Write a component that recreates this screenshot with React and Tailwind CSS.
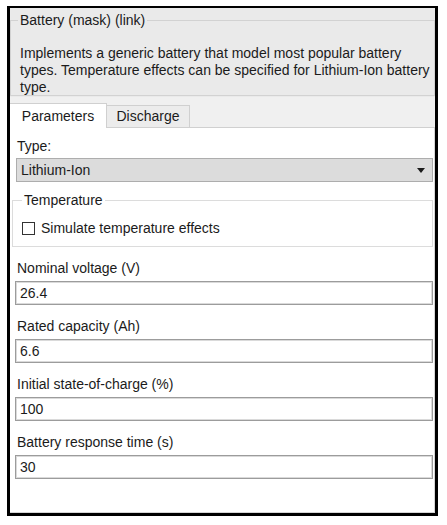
const font = { fontFamily: '"Liberation Sans", Arial, sans-serif' };

function Field({ label, value }) {
  return (
    <>
      <div className="mt-[13px] pl-[7px] text-[14px] leading-[16px]">{label}</div>
      <div className="ml-[5px] mt-[5px] flex h-[24px] w-[418px] items-center border border-[#9c9c9c] bg-white pl-[4px] text-[14px] shadow-[inset_0_0_0_1px_#dadada]">
        {value}
      </div>
    </>
  );
}

export default function App() {
  return (
    <div className="h-[525px] w-[447px] bg-white pl-[7px] pt-[6px] text-[#1b1b1b]" style={font}>
      <div className="flex h-[510px] w-[431px] flex-col border-[3px] border-t-2 border-black">
        {/* mask header */}
        <div className="h-[89px] bg-[#eaeaea] pt-[4px]">
          <fieldset className="h-[84px] border border-[#d2d2d2] pl-[7px]">
            <legend className="px-[2px] text-[14px] leading-[16px]">Battery (mask) (link)</legend>
            <p className="ml-[2px] mt-[17px] whitespace-nowrap text-[14px] leading-[17px]">
              Implements a generic battery that model most popular battery
              <br />
              types. Temperature effects can be specified for Lithium-Ion battery
              <br />
              type.
            </p>
          </fieldset>
        </div>

        {/* tabs */}
        <div className="flex h-[31px] items-end bg-[#f0f0f0] text-[14px]">
          <div className="flex h-[25px] w-[97px] items-center justify-center border-r border-t border-[#d0d0d0] bg-white">
            Parameters
          </div>
          <div className="flex h-[23px] w-[83px] items-center justify-center border-b border-r border-t border-[#d0d0d0] bg-[#ececec]">
            Discharge
          </div>
          <div className="flex-1 border-b border-[#d0d0d0]" />
        </div>

        {/* parameters */}
        <div className="flex-1 border-b border-r border-[#d6d6d6] bg-white">
          <div className="mt-[10px] pl-[7px] text-[14px] leading-[16px]">Type:</div>
          <div className="ml-[6px] mt-[4px] flex h-[24px] w-[417px] items-center justify-between border border-[#adadad] bg-[#dcdcdc] pl-[4px] pr-[7px] text-[14px]">
            <span>Lithium-Ion</span>
            <svg width="8" height="5" viewBox="0 0 8 5">
              <path d="M0 0h8L4 5z" fill="#1b1b1b" />
            </svg>
          </div>

          <fieldset className="ml-[2px] mt-[10px] h-[55px] w-[421px] border border-[#dcdcdc] pl-[9px]">
            <legend className="px-[2px] text-[14px] leading-[16px]">Temperature</legend>
            <label className="mt-[12px] flex items-center gap-[6px] text-[14px] leading-[16px]">
              <span className="h-[13px] w-[13px] border border-[#333] bg-white" />
              Simulate temperature effects
            </label>
          </fieldset>

          <Field label="Nominal voltage (V)" value="26.4" />
          <Field label="Rated capacity (Ah)" value="6.6" />
          <Field label="Initial state-of-charge (%)" value="100" />
          <Field label="Battery response time (s)" value="30" />
        </div>
      </div>
    </div>
  );
}
